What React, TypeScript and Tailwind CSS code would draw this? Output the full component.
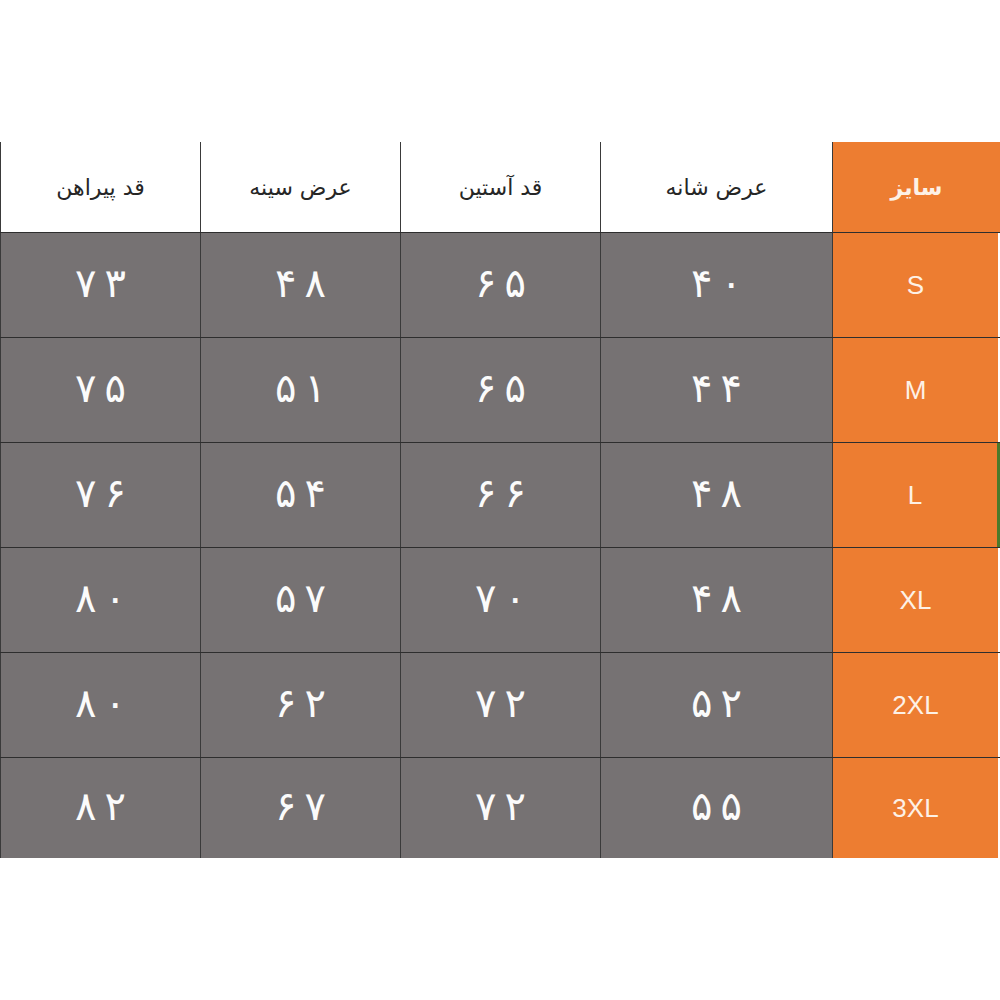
const headers = ["قد پیراهن", "عرض سینه", "قد آستین", "عرض شانه"];

const rows: { size: string; vals: string[] }[] = [
  { size: "S", vals: ["۷۳", "۴۸", "۶۵", "۴۰"] },
  { size: "M", vals: ["۷۵", "۵۱", "۶۵", "۴۴"] },
  { size: "L", vals: ["۷۶", "۵۴", "۶۶", "۴۸"] },
  { size: "XL", vals: ["۸۰", "۵۷", "۷۰", "۴۸"] },
  { size: "2XL", vals: ["۸۰", "۶۲", "۷۲", "۵۲"] },
  { size: "3XL", vals: ["۸۲", "۶۷", "۷۲", "۵۵"] },
];

const cols = "grid grid-cols-[200px_200px_200px_232px_168px]";

export default function App() {
  return (
    <div className="w-[1000px] h-[1000px] bg-white pt-[142px] font-['DejaVu_Sans',sans-serif]">
      <div className="w-[1000px]">
        <div className={`${cols} h-[90px]`}>
          {headers.map((h, i) => (
            <div
              key={i}
              dir="rtl"
              className="flex items-center justify-center border-l border-[#3a3a3a] text-[22px] text-[#262626]"
            >
              {h}
            </div>
          ))}
          <div
            dir="rtl"
            className="flex items-center justify-center border-l border-[#3a3a3a] bg-[#ed7d31] text-[22px] font-semibold text-[#fdf1e6]"
          >
            سایز
          </div>
        </div>
        {rows.map((r, ri) => (
          <div
            key={r.size}
            className={`${cols} border-t border-[#2e2e2e] ${ri === rows.length - 1 ? "h-[101px]" : "h-[105px]"}`}
          >
            {r.vals.map((v, i) => (
              <div
                key={i}
                className="flex items-center justify-center border-l border-[#3a3a3a] bg-[#767273] pb-1 text-[40px] text-[#fbfbfb]"
              >
                <span dir="ltr" className="flex gap-[8px]">
                  {v.split("").map((c, k) => (
                    <span key={k}>{c}</span>
                  ))}
                </span>
              </div>
            ))}
            <div
              className={`flex items-center justify-center border-l border-[#3a3a3a] bg-[#ed7d31] font-['Liberation_Sans',sans-serif] text-[26px] text-[#fdf1e6] ${r.size === "L" ? "border-r-[3px] border-r-[#4b7a2b]" : "mr-[2px]"}`}
            >
              {r.size}
            </div>
          </div>
        ))}
      </div>
    </div>
  );
}
